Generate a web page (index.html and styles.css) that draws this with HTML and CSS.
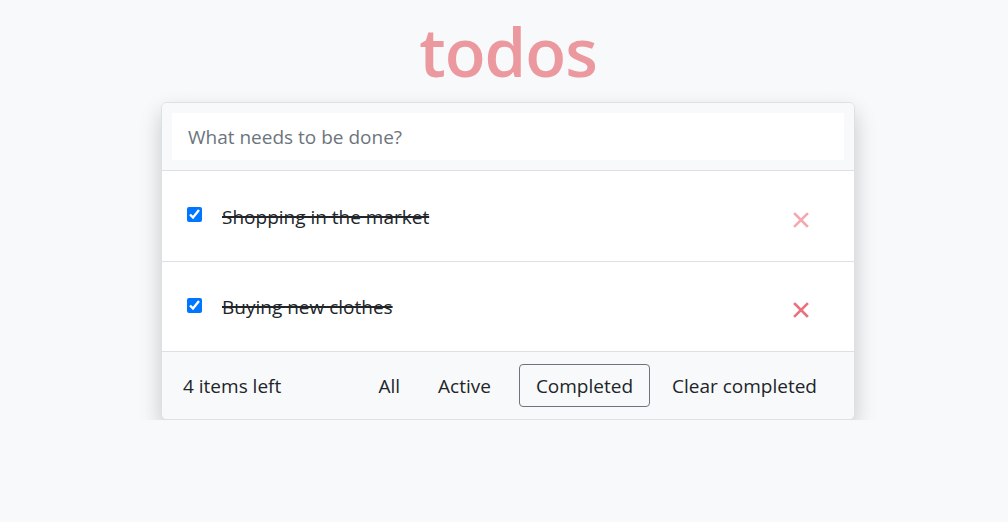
FILE: index.html
```html
<!DOCTYPE html>
<html lang="en">
<head>
<meta charset="utf-8">
<title>todos</title>
<link rel="stylesheet" href="styles.css">
</head>
<body>
<main class="app">
  <h1 class="title">todos</h1>
  <section class="card">
    <header class="card-header">
      <input class="new-todo" type="text" placeholder="What needs to be done?">
    </header>
    <ul class="todo-list">
      <li class="todo">
        <input class="toggle" type="checkbox" checked>
        <span class="todo-text">Shopping in the market</span>
        <button class="destroy destroy-faded" aria-label="Delete">
          <svg width="16" height="16" viewBox="0 0 16 16"><path d="M2 2 L14 14 M14 2 L2 14" stroke="currentColor" stroke-width="2.6" stroke-linecap="square"/></svg>
        </button>
      </li>
      <li class="todo">
        <input class="toggle" type="checkbox" checked>
        <span class="todo-text">Buying new clothes</span>
        <button class="destroy" aria-label="Delete">
          <svg width="16" height="16" viewBox="0 0 16 16"><path d="M2 2 L14 14 M14 2 L2 14" stroke="currentColor" stroke-width="2.6" stroke-linecap="square"/></svg>
        </button>
      </li>
    </ul>
    <footer class="card-footer">
      <span class="count">4 items left</span>
      <nav class="filters">
        <button class="filter">All</button>
        <button class="filter">Active</button>
        <button class="filter selected">Completed</button>
        <button class="filter">Clear completed</button>
      </nav>
    </footer>
  </section>
</main>
</body>
</html>
```
FILE: styles.css
```css
* { box-sizing: border-box; }
html, body { margin: 0; padding: 0; }
body {
  background: #f8f9fa;
  font-family: "Open Sans", "Noto Sans", sans-serif;
  color: #212529;
}
.app {
  display: flex;
  flex-direction: column;
  align-items: center;
  padding-left: 8px;
}
.title {
  margin: 11px 0 11px;
  font-size: 67px;
  font-weight: 600;
  line-height: 80px;
  color: #eb989f;
  letter-spacing: -1px;
}
.card {
  width: 694px;
  background: #fff;
  border: 1px solid #dee1e4;
  border-radius: 6px;
  box-shadow: 0 10px 22px rgba(0,0,0,0.2);
  overflow: hidden;
}
.card-header {
  background: #f8f9fa;
  padding: 10px;
  border-bottom: 1px solid #dcdfe3;
}
.new-todo {
  display: block;
  width: 100%;
  height: 47px;
  border: none;
  outline: none;
  background: #fff;
  padding: 0 16px;
  font-family: inherit;
  font-size: 19px;
  color: #212529;
}
.new-todo::placeholder { color: #6c757d; }
.todo-list { list-style: none; margin: 0; padding: 0; }
.todo {
  display: flex;
  align-items: center;
  height: 90.5px;
  padding: 0 45px 0 25px;
  border-bottom: 1px solid #dcdfe3;
}
.toggle {
  width: 15px;
  height: 15px;
  margin: 0 20px 2px 0;
  accent-color: #0075ff;
}
.todo-text {
  flex: 1;
  font-size: 19px;
  text-decoration: line-through;
  text-decoration-thickness: 2px;
  color: #212529;
  padding-top: 2px;
}
.destroy {
  border: none;
  background: none;
  padding: 0;
  width: 16px;
  height: 16px;
  margin-top: 8px;
  color: #e8737f;
  display: flex;
}
.destroy-faded { color: #f3a9b1; }
.card-footer {
  background: #f8f9fa;
  height: 67px;
  display: flex;
  align-items: center;
  padding: 0 21px 0 21px;
}
.count { font-size: 19px; flex: 1; }
.filters { display: flex; align-items: center; gap: 6px; }
.filter {
  font-family: inherit;
  font-size: 19px;
  color: #212529;
  background: none;
  border: 1px solid transparent;
  border-radius: 4px;
  height: 43px;
  padding: 0 15px;
}
.filter.selected { border-color: #6c757d; padding: 0 16px; margin-left: 6px; }
```
